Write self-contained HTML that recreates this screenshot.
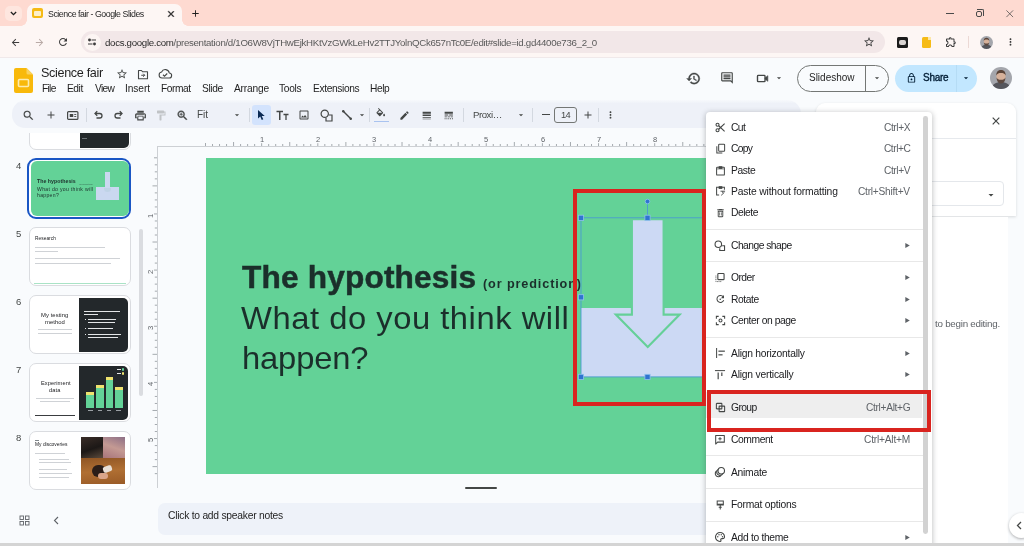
<!DOCTYPE html>
<html>
<head>
<meta charset="utf-8">
<title>Science fair - Google Slides</title>
<style>
*{box-sizing:border-box;margin:0;padding:0}
html,body{width:1024px;height:546px;overflow:hidden}
body{font-family:"Liberation Sans",sans-serif;background:#f9fbfd;position:relative;color:#1f1f1f}
.a{position:absolute}
.t{position:absolute;white-space:pre;line-height:1;will-change:transform;font-family:"Liberation Sans",sans-serif}
svg{position:absolute;overflow:visible}
.sep{position:absolute;width:1px;background:#d3d8e0;top:108px;height:14px}
.msep{position:absolute;left:706px;width:217px;height:1px;background:#e8e8e8}
</style>
</head>
<body>
<div id="root" class="a" style="left:0;top:0;width:1024px;height:546px;overflow:hidden;filter:blur(0.4px)">
<!-- browser chrome -->
<div class="a" style="left:0;top:0;width:1024px;height:26px;background:#fedad1"></div>
<div class="a" style="left:5px;top:6px;width:17px;height:15px;border-radius:5px;background:#fee6df"></div>
<svg style="left:9px;top:9px" width="9" height="9" viewBox="0 0 24 24"><path d="M5 8l7 7 7-7" fill="none" stroke="#1f1f1f" stroke-width="3.6"/></svg>
<div class="a" style="left:27px;top:4px;width:155px;height:22px;background:#fdf6f4;border-radius:7px 7px 0 0"></div>
<div class="a" style="left:21px;top:20px;width:6px;height:6px;background:radial-gradient(circle at 0 0,rgba(0,0,0,0) 5.5px,#fdf6f4 6px)"></div>
<div class="a" style="left:182px;top:20px;width:6px;height:6px;background:radial-gradient(circle at 100% 0,rgba(0,0,0,0) 5.5px,#fdf6f4 6px)"></div>
<!-- favicon -->
<div class="a" style="left:32px;top:8px;width:11px;height:10px;border-radius:2px;background:#f5ba15"></div>
<div class="a" style="left:34px;top:10.5px;width:7px;height:5px;background:#fdf0c9;border-radius:1px"></div>
<svg style="left:166px;top:8.5px" width="10" height="10" viewBox="0 0 24 24"><path d="M19 6.41L17.59 5 12 10.59 6.41 5 5 6.41 10.59 12 5 17.59 6.410 19 12 13.410 17.590 19 19 17.590 13.410 12z" fill="#1f1f1f" stroke="#1f1f1f" stroke-width="1"/></svg>
<svg style="left:189.500px;top:8px" width="11" height="11" viewBox="0 0 24 24"><path d="M19 13h-6v6h-2v-6H5v-2h6V5h2v6h6v2z" fill="#1f1f1f"/></svg>
<!-- window controls -->
<div class="a" style="left:945.500px;top:13px;width:8px;height:1px;background:#4a4a4a"></div>
<div class="a" style="left:975.500px;top:10.500px;width:6.500px;height:6.500px;border:1px solid #4a4a4a;border-radius:2px;background:#fedad1"></div>
<div class="a" style="left:977px;top:8.5px;width:7px;height:7px;border-top:1px solid #4a4a4a;border-right:1px solid #4a4a4a;border-radius:0 2px 0 0"></div>
<svg style="left:1006px;top:9.500px" width="7.500" height="7.500" viewBox="0 0 9 9"><path d="M.5.5l8 8M8.500.5l-8 8" stroke="#4a4a4a" stroke-width="0.9" fill="none"/></svg>
<!-- address row -->
<div class="a" style="left:0;top:26px;width:1024px;height:32px;background:#fdf6f4"></div>
<div class="a" style="left:0;top:57px;width:1024px;height:1px;background:#f0e9ea"></div>
<svg style="left:9.500px;top:36.500px" width="11" height="11" viewBox="0 0 24 24"><path d="M20 11H7.830l5.590-5.590L12 4l-8 8 8 8 1.410-1.410L7.830 13H20v-2z" fill="#3c3c3c"/></svg>
<svg style="left:33.500px;top:36.500px" width="11" height="11" viewBox="0 0 24 24"><path d="M12 4l-1.410 1.410L16.170 11H4v2h12.170l-5.580 5.590L12 20l8-8z" fill="#b9aaa6"/></svg>
<svg style="left:57px;top:36px" width="12" height="12" viewBox="0 0 24 24"><path d="M17.650 6.350C16.200 4.900 14.210 4 12 4c-4.420 0-7.990 3.580-7.990 8s3.570 8 7.990 8c3.730 0 6.840-2.550 7.730-6h-2.080c-.82 2.330-3.040 4-5.650 4-3.310 0-6-2.690-6-6s2.690-6 6-6c1.660 0 3.140.69 4.220 1.780L13 11h7V4l-2.350 2.350z" fill="#3c3c3c"/></svg>
<div class="a" style="left:81px;top:31.200px;width:804px;height:21.800px;border-radius:11px;background:#f2e7e8"></div>
<div class="a" style="left:83.500px;top:33.600px;width:17px;height:17px;border-radius:9px;background:#fcf5f3"></div>
<svg style="left:87px;top:37px" width="10" height="10" viewBox="0 0 20 20"><g stroke="#3c3c3c" stroke-width="2.200" fill="none"><path d="M9 6h9M2 14h9"/><circle cx="5" cy="6" r="2.900" fill="#3c3c3c" stroke="none"/><circle cx="15" cy="14" r="2.900" fill="#3c3c3c" stroke="none"/></g></svg>
<svg style="left:862.500px;top:36px" width="12" height="12" viewBox="0 0 24 24"><path d="M22 9.240l-7.190-.62L12 2 9.190 8.630 2 9.240l5.460 4.730L5.820 21 12 17.270 18.180 21l-1.630-7.030L22 9.240zM12 15.400l-3.760 2.270 1-4.280-3.320-2.880 4.380-.38L12 6.100l1.710 4.040 4.380.38-3.320 2.880 1 4.280L12 15.400z" fill="#3c3c3c"/></svg>
<!-- extension icons -->
<div class="a" style="left:897px;top:37px;width:11px;height:10.500px;border-radius:1.500px;background:#1b1b1b"></div>
<div class="a" style="left:899.300px;top:40px;width:6.400px;height:4.500px;border-radius:2px;background:#d9d4d2"></div>
<div class="a" style="left:921.500px;top:36.500px;width:9px;height:11px;border-radius:1.500px;background:#f6bb16"></div>
<div class="a" style="left:927.500px;top:36.500px;width:3px;height:3px;background:#fde7a8"></div>
<svg style="left:944.500px;top:36px" width="12" height="12" viewBox="0 0 24 24"><path d="M10.500 4.500c.28 0 .5.22.5.5v2h6v6h2c.28 0 .5.22.5.5s-.22.5-.5.5h-2v6h-2.120c-.68-1.750-2.390-3-4.380-3s-3.700 1.250-4.380 3H4v-2.120c1.750-.68 3-2.390 3-4.380 0-1.990-1.240-3.700-2.990-4.380L4 7h6V5c0-.28.220-.5.5-.5m0-2C9.120 2.500 8 3.620 8 5H4c-1.100 0-1.990.9-1.990 2v3.800h.29c1.490 0 2.700 1.210 2.700 2.700s-1.210 2.700-2.700 2.700H2V20c0 1.100.9 2 2 2h3.800v-.3c0-1.490 1.210-2.700 2.700-2.700s2.700 1.210 2.700 2.700v.3H17c1.100 0 2-.9 2-2v-4c1.380 0 2.500-1.120 2.500-2.500S20.380 11 19 11V7c0-1.100-.9-2-2-2h-4c0-1.380-1.120-2.500-2.500-2.500z" fill="#3c3c3c"/></svg>
<div class="a" style="left:968px;top:36px;width:1px;height:12px;background:#ecd9d5"></div>
<svg style="left:979.500px;top:35.500px" width="13" height="13" viewBox="0 0 22 22"><defs><clipPath id="av1"><circle cx="11" cy="11" r="11"/></clipPath></defs><g clip-path="url(#av1)"><rect width="22" height="22" fill="#a4a6ac"/><path d="M2 22c0-5 4-7 9-7s9 2 9 7z" fill="#55565c"/><ellipse cx="11" cy="9.500" rx="4.600" ry="5.600" fill="#d6b19a"/><path d="M6.300 8.500c0-4 2-5.500 4.700-5.500s4.700 1.500 4.700 5.500c-1-2-2.500-2.500-4.700-2.500s-3.700.5-4.700 2.500z" fill="#5a4438"/><path d="M6.500 10.500c.3 4 2 6 4.500 6s4.200-2 4.500-6c-.8 1.800-2.200 2.300-4.500 2.300s-3.700-.5-4.500-2.300z" fill="#5e4a40"/></g></svg>
<svg style="left:1005px;top:36px" width="11" height="12" viewBox="0 0 24 24"><path d="M12 8c1.100 0 2-.9 2-2s-.9-2-2-2-2 .9-2 2 .9 2 2 2zm0 2c-1.100 0-2 .9-2 2s.9 2 2 2 2-.9 2-2-.9-2-2-2zm0 6c-1.100 0-2 .9-2 2s.9 2 2 2 2-.9 2-2-.9-2-2-2z" fill="#3c3c3c"/></svg>

<!-- slides header -->
<div class="a" style="left:0;top:58px;width:1024px;height:488px;background:#f9fbfd"></div>
<!-- logo -->
<svg style="left:14px;top:68px" width="19" height="25" viewBox="0 0 19 25"><path d="M2 0h10.500L19 6.500V23a2 2 0 0 1-2 2H2a2 2 0 0 1-2-2V2a2 2 0 0 1 2-2z" fill="#f8b90b"/><path d="M12.500 0L19 6.500h-5a1.500 1.500 0 0 1-1.500-1.500z" fill="#f9d25f"/><rect x="4.500" y="11.500" width="10" height="7" rx="1" fill="none" stroke="#fdecb0" stroke-width="1.600"/></svg>
<!-- star, folder, cloud -->
<svg style="left:115.500px;top:68px" width="12" height="12" viewBox="0 0 24 24"><path d="M22 9.240l-7.190-.62L12 2 9.190 8.630 2 9.240l5.460 4.730L5.820 21 12 17.270 18.180 21l-1.630-7.030L22 9.240zM12 15.400l-3.760 2.270 1-4.280-3.320-2.880 4.380-.38L12 6.100l1.710 4.040 4.380.38-3.320 2.880 1 4.280L12 15.400z" fill="#444746"/></svg>
<svg style="left:137px;top:68.500px" width="12" height="11" viewBox="0 0 24 22"><path d="M3 3h6l2 2.500h10v14H3z" fill="none" stroke="#444746" stroke-width="2.200" stroke-linejoin="round"/><path d="M8.500 12.500h6.500M12.500 9.500l3 3-3 3" fill="none" stroke="#444746" stroke-width="2"/></svg>
<svg style="left:158px;top:69px" width="14" height="10" viewBox="0 0 28 20"><path d="M8 18a6 6 0 0 1-.8-11.900A8 8 0 0 1 22.500 8 5 5 0 0 1 22 18z" fill="none" stroke="#444746" stroke-width="2.200" stroke-linejoin="round"/><path d="M10 11.500l3 3 5.500-5.500" fill="none" stroke="#444746" stroke-width="2.200"/></svg>
<!-- right icons -->
<svg style="left:685.500px;top:70.500px" width="15" height="15" viewBox="0 0 24 24"><path d="M13 3c-4.970 0-9 4.030-9 9H1l3.890 3.890.07.14L9 12H6c0-3.870 3.130-7 7-7s7 3.130 7 7-3.130 7-7 7c-1.930 0-3.680-.79-4.940-2.060l-1.420 1.420C8.270 19.990 10.510 21 13 21c4.970 0 9-4.030 9-9s-4.030-9-9-9zm-1 5v5l4.280 2.540.72-1.210-3.500-2.080V8H12z" fill="#444746" stroke="#444746" stroke-width=".6"/></svg>
<svg style="left:719.500px;top:71px" width="14" height="14" viewBox="0 0 24 24"><path d="M21.990 4c0-1.100-.89-2-1.990-2H4c-1.100 0-2 .9-2 2v12c0 1.100.9 2 2 2h14l4 4-.01-18zM20 4v13.170L18.830 16H4V4h16zM6 12h12v2H6zm0-3h12v2H6zm0-3h12v2H6z" fill="#444746"/></svg>
<svg style="left:754.500px;top:70.500px" width="15" height="15" viewBox="0 0 24 24"><rect x="4" y="7" width="12" height="10" rx="1.200" fill="none" stroke="#444746" stroke-width="2.200"/><path d="M16 11.200l4.500-3.700v9l-4.500-3.700z" fill="#444746" stroke="#444746" stroke-width="1" stroke-linejoin="round"/></svg>
<svg style="left:774px;top:73px" width="10" height="10" viewBox="0 0 24 24"><path d="M7 10l5 5 5-5z" fill="#444746"/></svg>
<!-- slideshow button -->
<div class="a" style="left:797px;top:65px;width:92px;height:27px;border:1px solid #747775;border-radius:14px;background:#f9fbfd"></div>
<div class="a" style="left:865px;top:65px;width:1px;height:27px;background:#747775"></div>
<svg style="left:871.500px;top:73px" width="10" height="10" viewBox="0 0 24 24"><path d="M7 10l5 5 5-5z" fill="#444746"/></svg>
<!-- share button -->
<div class="a" style="left:894.500px;top:65px;width:82.500px;height:27px;border-radius:14px;background:#c2e7ff"></div>
<div class="a" style="left:956px;top:65px;width:1px;height:27px;background:#b5dcf5"></div>
<svg style="left:905.500px;top:72px" width="11" height="12" viewBox="0 0 24 24"><path d="M18 8h-1V6c0-2.760-2.240-5-5-5S7 3.240 7 6v2H6c-1.100 0-2 .9-2 2v10c0 1.100.9 2 2 2h12c1.100 0 2-.9 2-2V10c0-1.100-.9-2-2-2zM9 6c0-1.660 1.340-3 3-3s3 1.340 3 3v2H9V6zm9 14H6V10h12v10zm-6-3c1.100 0 2-.9 2-2s-.9-2-2-2-2 .9-2 2 .9 2 2 2z" fill="#001d35"/></svg>
<svg style="left:960.500px;top:73px" width="10" height="10" viewBox="0 0 24 24"><path d="M7 10l5 5 5-5z" fill="#001d35"/></svg>
<!-- avatar -->
<svg style="left:990px;top:67px" width="22" height="22" viewBox="0 0 22 22"><defs><clipPath id="av2"><circle cx="11" cy="11" r="11"/></clipPath></defs><g clip-path="url(#av2)"><rect width="22" height="22" fill="#a4a6ac"/><path d="M2 22c0-5 4-7 9-7s9 2 9 7z" fill="#55565c"/><ellipse cx="11" cy="9.500" rx="4.600" ry="5.600" fill="#d6b19a"/><path d="M6.300 8.500c0-4 2-5.500 4.700-5.500s4.700 1.500 4.700 5.500c-1-2-2.500-2.500-4.700-2.500s-3.700.5-4.700 2.500z" fill="#5a4438"/><path d="M6.500 10.500c.3 4 2 6 4.500 6s4.200-2 4.500-6c-.8 1.800-2.200 2.300-4.500 2.300s-3.700-.5-4.500-2.300z" fill="#5e4a40"/></g></svg>

<!-- toolbar -->
<div class="a" style="left:12px;top:100px;width:788.500px;height:27.500px;border-radius:14px 14px 13px 13px;background:linear-gradient(#f7f9fc,#eef1f8 3.500px)"></div>
<svg style="left:22px;top:108.500px" width="13" height="13" viewBox="0 0 24 24"><path d="M15.500 14h-.79l-.28-.27A6.471 6.471 0 0 0 16 9.500 6.500 6.500 0 1 0 9.500 16c1.610 0 3.090-.59 4.230-1.570l.27.28v.79l5 4.990L20.490 19l-4.990-5zm-6 0C7.010 14 5 11.990 5 9.500S7.010 5 9.500 5 14 7.010 14 9.500 11.990 14 9.500 14z" fill="#444746" stroke="#444746" stroke-width=".2"/></svg>
<svg style="left:44.500px;top:109px" width="12" height="12" viewBox="0 0 24 24"><path d="M19 13h-6v6h-2v-6H5v-2h6V5h2v6h6v2z" fill="#444746"/></svg>
<svg style="left:67px;top:110.500px" width="11.500" height="9" viewBox="0 0 23 18"><rect x="1.200" y="1.200" width="20.600" height="15.600" rx="2" fill="none" stroke="#444746" stroke-width="2.400"/><rect x="5.500" y="6" width="7" height="6" fill="#444746"/><path d="M14.500 7h4M14.500 11h4" stroke="#444746" stroke-width="1.800"/></svg>
<div class="sep" style="left:85.500px"></div>
<svg style="left:92px;top:109px" width="12" height="12" viewBox="0 0 24 24"><path d="M7 9h8.500a4.500 4.500 0 0 1 0 9H9" fill="none" stroke="#444746" stroke-width="2.600"/><path d="M10.500 4.500L6 9l4.500 4.500" fill="none" stroke="#444746" stroke-width="2.600"/></svg>
<svg style="left:112.500px;top:109px" width="12" height="12" viewBox="0 0 24 24"><path d="M17 9H8.500a4.500 4.500 0 0 0 0 9H15" fill="none" stroke="#444746" stroke-width="2.600"/><path d="M13.500 4.500L18 9l-4.500 4.500" fill="none" stroke="#444746" stroke-width="2.600"/></svg>
<svg style="left:134px;top:108.500px" width="13" height="13" viewBox="0 0 24 24"><path d="M19 8H5c-1.660 0-3 1.340-3 3v6h4v4h12v-4h4v-6c0-1.660-1.340-3-3-3zm-3 11H8v-5h8v5zm3-7c-.55 0-1-.45-1-1s.45-1 1-1 1 .45 1 1-.45 1-1 1zm-1-9H6v4h12V3z" fill="#444746"/><path d="M4.500 10.500h15v5h-2v-3h-11v3h-2z" fill="#eef1f8"/></svg>
<svg style="left:155px;top:108.500px" width="12" height="13" viewBox="0 0 24 24"><path d="M18 4V3c0-.55-.45-1-1-1H5c-.55 0-1 .45-1 1v4c0 .55.45 1 1 1h12c.55 0 1-.45 1-1V6h1v4H9v11c0 .55.45 1 1 1h2c.55 0 1-.45 1-1v-9h8V4h-3z" fill="#c0c3c6"/></svg>
<svg style="left:175.500px;top:108.500px" width="13" height="13" viewBox="0 0 24 24"><path d="M15.500 14h-.79l-.28-.27C15.410 12.590 16 11.110 16 9.500 16 5.910 13.090 3 9.500 3S3 5.910 3 9.500 5.910 16 9.500 16c1.610 0 3.090-.59 4.230-1.570l.27.28v.79l5 4.990L20.490 19l-4.990-5zm-6 0C7.010 14 5 11.990 5 9.500S7.010 5 9.500 5 14 7.010 14 9.500 11.990 14 9.500 14zm2.500-4h-2v2H9v-2H7V9h2V7h1v2h2v1z" fill="#444746" stroke="#444746" stroke-width=".6"/></svg>
<svg style="left:231.500px;top:110px" width="10" height="10" viewBox="0 0 24 24"><path d="M7 10l5 5 5-5z" fill="#444746"/></svg>
<div class="sep" style="left:249px"></div>
<div class="a" style="left:251.500px;top:105px;width:19.500px;height:19.500px;border-radius:3px;background:#d3e3fd"></div>
<svg style="left:256px;top:109px" width="10" height="12" viewBox="0 0 20 24"><path d="M4 2v17l4.500-4 3 7 3-1.300-3-6.700h6z" fill="#0b2a55"/></svg>
<svg style="left:275.500px;top:109.500px" width="13" height="11" viewBox="0 0 26 22"><path d="M1 3h13M7.500 3v17" stroke="#444746" stroke-width="3" fill="none"/><path d="M15 9h10M20 9v11" stroke="#444746" stroke-width="2.600" fill="none"/></svg>
<svg style="left:297.500px;top:109px" width="12" height="12" viewBox="0 0 24 24"><path d="M19 5v14H5V5h14m0-2H5c-1.100 0-2 .9-2 2v14c0 1.100.9 2 2 2h14c1.100 0 2-.9 2-2V5c0-1.100-.9-2-2-2zm-4.860 8.860l-3 3.870L9 13.140 6 17h12l-3.860-5.140z" fill="#444746"/></svg>
<svg style="left:319.500px;top:108.500px" width="13" height="13" viewBox="0 0 26 26"><circle cx="9.500" cy="9.500" r="7.300" fill="none" stroke="#444746" stroke-width="2.400"/><path d="M18 12h6v12H12v-6" fill="none" stroke="#444746" stroke-width="2.400"/></svg>
<svg style="left:341px;top:109px" width="12" height="12" viewBox="0 0 24 24"><path d="M4 4l16 16" stroke="#444746" stroke-width="3"/><circle cx="4.500" cy="4.500" r="2.500" fill="#444746"/><circle cx="19.500" cy="19.500" r="2.500" fill="#444746"/></svg>
<svg style="left:357px;top:110px" width="10" height="10" viewBox="0 0 24 24"><path d="M7 10l5 5 5-5z" fill="#444746"/></svg>
<div class="sep" style="left:368.500px"></div>
<svg style="left:375px;top:108px" width="11.500" height="11.500" viewBox="0 0 24 24"><path d="M16.560 8.940L7.620 0 6.210 1.410l2.380 2.380-5.150 5.150c-.59.59-.59 1.540 0 2.120l5.500 5.500c.29.29.68.44 1.060.44s.77-.15 1.060-.44l5.500-5.500c.59-.58.59-1.530 0-2.120zM5.210 10L10 5.210 14.790 10H5.210zM19 11.500s-2 2.170-2 3.500c0 1.100.9 2 2 2s2-.9 2-2c0-1.330-2-3.500-2-3.500z" fill="#444746"/></svg>
<div class="a" style="left:374px;top:120.500px;width:15px;height:1.500px;background:#a9c3f0"></div>
<svg style="left:398.500px;top:109.500px" width="11" height="11" viewBox="0 0 24 24"><path d="M3 17.250V21h3.750L17.810 9.940l-3.750-3.750L3 17.250zM20.710 7.040c.39-.39.39-1.020 0-1.410l-2.340-2.340c-.39-.39-1.020-.39-1.410 0l-1.830 1.830 3.750 3.750 1.830-1.830z" fill="#444746"/></svg>
<svg style="left:421px;top:109.500px" width="11.500" height="11" viewBox="0 0 24 24"><path d="M3 17h18v-2H3v2zm0 3h18v-1H3v1zm0-7h18v-3H3v3zm0-9v4h18V4H3z" fill="#444746"/></svg>
<svg style="left:443px;top:109.500px" width="11.500" height="11" viewBox="0 0 24 24"><path d="M3 16h5v-2H3v2zm6.500 0h5v-2h-5v2zm6.500 0h5v-2h-5v2zM3 20h2v-2H3v2zm4 0h2v-2H7v2zm4 0h2v-2h-2v2zm4 0h2v-2h-2v2zm4 0h2v-2h-2v2zM3 12h8v-2H3v2zm10 0h8v-2h-8v2zM3 4v4h18V4H3z" fill="#444746"/></svg>
<div class="sep" style="left:462.500px"></div>
<svg style="left:515.500px;top:110px" width="10" height="10" viewBox="0 0 24 24"><path d="M7 10l5 5 5-5z" fill="#444746"/></svg>
<div class="sep" style="left:532px"></div>
<div class="a" style="left:541.500px;top:114.400px;width:8px;height:1.100px;background:#444746"></div>
<div class="a" style="left:554px;top:106.500px;width:22.500px;height:16px;border:1px solid #747775;border-radius:3px"></div>
<svg style="left:582px;top:109px" width="12" height="12" viewBox="0 0 24 24"><path d="M19 13h-6v6h-2v-6H5v-2h6V5h2v6h6v2z" fill="#444746"/></svg>
<div class="sep" style="left:598px"></div>
<svg style="left:605px;top:109px" width="11" height="12" viewBox="0 0 24 24"><path d="M12 8c1.100 0 2-.9 2-2s-.9-2-2-2-2 .9-2 2 .9 2 2 2zm0 2c-1.100 0-2 .9-2 2s.9 2 2 2 2-.9 2-2-.9-2-2-2zm0 6c-1.100 0-2 .9-2 2s.9 2 2 2 2-.9 2-2-.9-2-2-2z" fill="#444746"/></svg>

<!-- filmstrip -->
<div class="a" style="left:0;top:133.300px;width:150px;height:409.700px;overflow:hidden"><div class="a" style="left:0;top:-133.300px;width:150px;height:546px">
<div class="a" style="left:28.500px;top:91px;width:102px;height:58.500px;border:1px solid #dadce0;border-radius:7px;background:#fff;overflow:hidden;"><div class="a" style="left:50px;top:0;width:49px;height:55.500px;background:#23282b;border-radius:0 5px 5px 0"></div><div class="a" style="left:52.5px;top:45.5px;width:5.0px;height:0.8px;background:#6b7276"></div></div>
<div class="a" style="left:27.300px;top:157.800px;width:104.200px;height:61.700px;border:2px solid #1a56c4;border-radius:9px;background:#fff"></div>
<div class="a" style="left:30.600px;top:161px;width:98.400px;height:54.800px;border-radius:6px;background:#63d297;overflow:hidden"><div class="a" style="left:65.400px;top:26.300px;width:23.400px;height:12.300px;background:#cad8f0"></div><div class="a" style="left:74.400px;top:10.500px;width:5.200px;height:21px;background:#cad8f0"></div><div class="a" style="left:73.400px;top:27px;width:7.200px;height:4px;background:#bfd3e6;border-radius:0 0 4px 4px"></div><span class="t" style="left:6.400px;top:18.300px;font-size:5.200px;font-weight:bold;color:#1d302c;letter-spacing:.05px">The hypothesis</span><span class="t" style="left:48px;top:21.500px;font-size:2px;font-weight:bold;color:#1d302c;opacity:.55">(or prediction)</span><span class="t" style="left:6.400px;top:25.600px;font-size:5.100px;color:#1d302c;letter-spacing:.32px">What do you think will</span><span class="t" style="left:6.400px;top:32.400px;font-size:5.100px;color:#1d302c;letter-spacing:.32px">happen?</span></div>
<div class="a" style="left:28.500px;top:227px;width:102px;height:58.500px;border:1px solid #dadce0;border-radius:7px;background:#fff;overflow:hidden;"><span class="t" style="left:5.0px;top:9.4px;font-size:4.8px;color:#202124;letter-spacing:.05px">Research</span><div class="a" style="left:5.0px;top:19.2px;width:70.0px;height:0.8px;background:#cfd2d6"></div><div class="a" style="left:5.0px;top:23.4px;width:23.0px;height:0.8px;background:#cfd2d6"></div><div class="a" style="left:5.0px;top:30.2px;width:85.0px;height:0.8px;background:#cfd2d6"></div><div class="a" style="left:5.0px;top:35.0px;width:76.0px;height:0.8px;background:#cfd2d6"></div><div class="a" style="left:4.5px;top:55.0px;width:92.0px;height:0.9px;background:#a9e3c6"></div></div>
<div class="a" style="left:28.500px;top:295px;width:102px;height:58.500px;border:1px solid #dadce0;border-radius:7px;background:#fff;overflow:hidden;"><div class="a" style="left:49.800px;top:2px;width:49px;height:53.500px;background:#23282b;border-radius:0 5px 5px 0"></div><span class="t" style="left:11.5px;top:16.8px;font-size:5.9px;color:#202124;letter-spacing:.05px">My testing</span><span class="t" style="left:15.8px;top:24.2px;font-size:5.9px;color:#202124;letter-spacing:.05px">method</span><div class="a" style="left:8.5px;top:33.3px;width:34.0px;height:0.8px;background:#cfd2d6"></div><div class="a" style="left:8.5px;top:36.6px;width:34.0px;height:0.8px;background:#cfd2d6"></div><div class="a" style="left:54.2px;top:14.5px;width:36.0px;height:1.1px;background:#e4e6e8"></div><div class="a" style="left:54.2px;top:17.6px;width:14.0px;height:1.1px;background:#e4e6e8"></div><div class="a" style="left:58.5px;top:23.0px;width:28.0px;height:1.1px;background:#e4e6e8"></div><div class="a" style="left:58.5px;top:26.0px;width:27.0px;height:1.1px;background:#e4e6e8"></div><div class="a" style="left:58.5px;top:31.8px;width:25.0px;height:1.1px;background:#e4e6e8"></div><div class="a" style="left:58.5px;top:37.6px;width:33.0px;height:1.1px;background:#e4e6e8"></div><div class="a" style="left:58.5px;top:41.2px;width:30.0px;height:1.1px;background:#e4e6e8"></div><div class="a" style="left:55.5px;top:23.0px;width:1.2px;height:1.2px;background:#e4e6e8"></div><div class="a" style="left:55.5px;top:31.8px;width:1.2px;height:1.2px;background:#e4e6e8"></div><div class="a" style="left:55.5px;top:37.6px;width:1.2px;height:1.2px;background:#e4e6e8"></div></div>
<div class="a" style="left:28.500px;top:363px;width:102px;height:58.500px;border:1px solid #dadce0;border-radius:7px;background:#fff;overflow:hidden;"><div class="a" style="left:49.800px;top:2px;width:49px;height:53.500px;background:#23282b;border-radius:0 5px 5px 0"></div><span class="t" style="left:11.0px;top:16.5px;font-size:5.7px;color:#202124;letter-spacing:.08px">Experiment</span><span class="t" style="left:19.8px;top:23.6px;font-size:5.7px;color:#202124;letter-spacing:.08px">data</span><div class="a" style="left:6.5px;top:33.6px;width:38.0px;height:0.8px;background:#cfd2d6"></div><div class="a" style="left:10.5px;top:37.2px;width:30.0px;height:0.8px;background:#cfd2d6"></div><div class="a" style="left:5.0px;top:51.2px;width:40.0px;height:1px;background:#3a3d40"></div><div class="a" style="left:56.7px;top:28.3px;width:8.0px;height:15.5px;background:#63d297"></div><div class="a" style="left:56.7px;top:28.3px;width:8.0px;height:3px;background:#efe36f"></div><div class="a" style="left:58.2px;top:46.0px;width:5.0px;height:0.9px;background:#9aa0a4"></div><div class="a" style="left:66.7px;top:20.9px;width:7.4px;height:22.9px;background:#63d297"></div><div class="a" style="left:66.7px;top:20.9px;width:7.4px;height:3px;background:#efe36f"></div><div class="a" style="left:68.2px;top:46.0px;width:4.4px;height:0.9px;background:#9aa0a4"></div><div class="a" style="left:76.1px;top:13.2px;width:7.4px;height:30.6px;background:#63d297"></div><div class="a" style="left:76.1px;top:13.2px;width:7.4px;height:3px;background:#efe36f"></div><div class="a" style="left:77.6px;top:46.0px;width:4.4px;height:0.9px;background:#9aa0a4"></div><div class="a" style="left:85.3px;top:23.4px;width:8.0px;height:20.4px;background:#63d297"></div><div class="a" style="left:85.3px;top:23.4px;width:8.0px;height:3px;background:#efe36f"></div><div class="a" style="left:86.8px;top:46.0px;width:5.0px;height:0.9px;background:#9aa0a4"></div><div class="a" style="left:92px;top:4.300px;width:2.400px;height:2.400px;border-radius:1.200px;background:#63d297"></div><div class="a" style="left:92px;top:8.200px;width:2.400px;height:2.400px;border-radius:1.200px;background:#efe36f"></div><div class="a" style="left:87.0px;top:5.0px;width:4.0px;height:1px;background:#e4e6e8"></div><div class="a" style="left:87.0px;top:9.0px;width:4.0px;height:1px;background:#e4e6e8"></div></div>
<div class="a" style="left:28.500px;top:431px;width:102px;height:58.500px;border:1px solid #dadce0;border-radius:7px;background:#fff;overflow:hidden;"><div class="a" style="left:51.700px;top:5.100px;width:21.700px;height:20.500px;background:linear-gradient(160deg,#3a2d27,#1c1816 55%,#5b4a3c)"></div><div class="a" style="left:73.900px;top:5.100px;width:21.400px;height:20.500px;background:linear-gradient(200deg,#8d6f86,#c49a93 50%,#a8747a)"></div><div class="a" style="left:51.700px;top:26.100px;width:43.600px;height:25.600px;background:linear-gradient(175deg,#8f5524,#b06f33 50%,#9a5b27)"></div><div class="a" style="left:62px;top:33px;width:14px;height:12px;border-radius:6px;background:#2a1d18"></div><div class="a" style="left:73px;top:33.500px;width:9px;height:6px;border-radius:2px;background:#e8dfd6;transform:rotate(-20deg)"></div><div class="a" style="left:68px;top:41px;width:10px;height:6px;border-radius:3px;background:#d9a58a"></div><span class="t" style="left:5.0px;top:10.8px;font-size:4.9px;color:#202124;letter-spacing:0">My discoveries</span><div class="a" style="left:5.0px;top:8.0px;width:4.0px;height:0.8px;background:#80868b"></div><div class="a" style="left:5.0px;top:21.0px;width:30.0px;height:0.8px;background:#cfd2d6"></div><div class="a" style="left:9.5px;top:26.8px;width:30.0px;height:0.8px;background:#cfd2d6"></div><div class="a" style="left:9.5px;top:30.0px;width:32.0px;height:0.8px;background:#cfd2d6"></div><div class="a" style="left:9.5px;top:36.5px;width:28.0px;height:0.8px;background:#cfd2d6"></div><div class="a" style="left:9.5px;top:41.0px;width:33.0px;height:0.8px;background:#cfd2d6"></div><div class="a" style="left:9.5px;top:44.5px;width:30.0px;height:0.8px;background:#cfd2d6"></div></div>
<div class="a" style="left:139px;top:228.500px;width:4.300px;height:167px;border-radius:2.200px;background:#dadce0"></div>
</div></div>
<!-- rulers & canvas -->
<div class="a" style="left:157px;top:131px;width:660px;height:16px;background:#f9fbfd"></div>
<div class="a" style="left:157px;top:146px;width:660px;height:1px;background:#cdd0d4"></div>
<div class="a" style="left:157px;top:146px;width:1px;height:342px;background:#cdd0d4"></div>
<svg style="left:0;top:0" width="1024" height="546" viewBox="0 0 1024 546"><g stroke="#8f959b" stroke-width="0.8" fill="none"><path d="M205.50 146V143"/><path d="M212.52 146V144"/><path d="M219.54 146V144"/><path d="M226.56 146V144"/><path d="M233.57 146V142"/><path d="M240.59 146V144"/><path d="M247.61 146V144"/><path d="M254.63 146V144"/><path d="M268.67 146V144"/><path d="M275.69 146V144"/><path d="M282.71 146V144"/><path d="M289.73 146V142"/><path d="M296.74 146V144"/><path d="M303.76 146V144"/><path d="M310.78 146V144"/><path d="M324.82 146V144"/><path d="M331.84 146V144"/><path d="M338.86 146V144"/><path d="M345.88 146V142"/><path d="M352.89 146V144"/><path d="M359.91 146V144"/><path d="M366.93 146V144"/><path d="M380.97 146V144"/><path d="M387.99 146V144"/><path d="M395.01 146V144"/><path d="M402.02 146V142"/><path d="M409.04 146V144"/><path d="M416.06 146V144"/><path d="M423.08 146V144"/><path d="M437.12 146V144"/><path d="M444.14 146V144"/><path d="M451.16 146V144"/><path d="M458.17 146V142"/><path d="M465.19 146V144"/><path d="M472.21 146V144"/><path d="M479.23 146V144"/><path d="M493.27 146V144"/><path d="M500.29 146V144"/><path d="M507.31 146V144"/><path d="M514.33 146V142"/><path d="M521.34 146V144"/><path d="M528.36 146V144"/><path d="M535.38 146V144"/><path d="M549.42 146V144"/><path d="M556.44 146V144"/><path d="M563.46 146V144"/><path d="M570.47 146V142"/><path d="M577.49 146V144"/><path d="M584.51 146V144"/><path d="M591.53 146V144"/><path d="M605.57 146V144"/><path d="M612.59 146V144"/><path d="M619.61 146V144"/><path d="M626.62 146V142"/><path d="M633.64 146V144"/><path d="M640.66 146V144"/><path d="M647.68 146V144"/><path d="M661.72 146V144"/><path d="M668.74 146V144"/><path d="M675.76 146V144"/><path d="M682.77 146V142"/><path d="M689.79 146V144"/><path d="M696.81 146V144"/><path d="M703.83 146V144"/><path d="M717.87 146V144"/><path d="M724.89 146V144"/><path d="M731.91 146V144"/><path d="M738.92 146V142"/><path d="M745.94 146V144"/><path d="M752.96 146V144"/><path d="M759.98 146V144"/><path d="M774.02 146V144"/><path d="M781.04 146V144"/><path d="M788.06 146V144"/><path d="M795.07 146V142"/><path d="M802.09 146V144"/><path d="M809.11 146V144"/><path d="M157 157.80H154"/><path d="M157 164.82H154.8"/><path d="M157 171.84H154.8"/><path d="M157 178.86H154.8"/><path d="M157 185.88H152.5"/><path d="M157 192.89H154.8"/><path d="M157 199.91H154.8"/><path d="M157 206.93H154.8"/><path d="M157 220.97H154.8"/><path d="M157 227.99H154.8"/><path d="M157 235.01H154.8"/><path d="M157 242.03H152.5"/><path d="M157 249.04H154.8"/><path d="M157 256.06H154.8"/><path d="M157 263.08H154.8"/><path d="M157 277.12H154.8"/><path d="M157 284.14H154.8"/><path d="M157 291.16H154.8"/><path d="M157 298.18H152.5"/><path d="M157 305.19H154.8"/><path d="M157 312.21H154.8"/><path d="M157 319.23H154.8"/><path d="M157 333.27H154.8"/><path d="M157 340.29H154.8"/><path d="M157 347.31H154.8"/><path d="M157 354.33H152.5"/><path d="M157 361.34H154.8"/><path d="M157 368.36H154.8"/><path d="M157 375.38H154.8"/><path d="M157 389.42H154.8"/><path d="M157 396.44H154.8"/><path d="M157 403.46H154.8"/><path d="M157 410.48H152.5"/><path d="M157 417.49H154.8"/><path d="M157 424.51H154.8"/><path d="M157 431.53H154.8"/><path d="M157 445.57H154.8"/><path d="M157 452.59H154.8"/><path d="M157 459.61H154.8"/><path d="M157 466.62H152.5"/><path d="M157 473.64H154.8"/><path d="M261.65 146V143.200"/><path d="M317.80 146V143.200"/><path d="M373.95 146V143.200"/><path d="M430.10 146V143.200"/><path d="M486.25 146V143.200"/><path d="M542.40 146V143.200"/><path d="M598.55 146V143.200"/><path d="M654.70 146V143.200"/><path d="M710.85 146V143.200"/><path d="M767.00 146V143.200"/><path d="M157 213.95H154"/><path d="M157 270.10H154"/><path d="M157 326.25H154"/><path d="M157 382.40H154"/><path d="M157 438.55H154"/></g></svg>
<span class="t" style="left:259.8px;top:135.65px;font-size:7.5px;color:#5f6368;">1</span>
<span class="t" style="left:316.0px;top:135.65px;font-size:7.5px;color:#5f6368;">2</span>
<span class="t" style="left:372.1px;top:135.65px;font-size:7.5px;color:#5f6368;">3</span>
<span class="t" style="left:428.3px;top:135.65px;font-size:7.5px;color:#5f6368;">4</span>
<span class="t" style="left:484.4px;top:135.65px;font-size:7.5px;color:#5f6368;">5</span>
<span class="t" style="left:540.6px;top:135.65px;font-size:7.5px;color:#5f6368;">6</span>
<span class="t" style="left:596.8px;top:135.65px;font-size:7.5px;color:#5f6368;">7</span>
<span class="t" style="left:652.9px;top:135.65px;font-size:7.5px;color:#5f6368;">8</span>
<span class="t" style="left:146.500px;top:211.7px;font-size:7.500px;color:#5f6368;width:8px;height:8px;transform:rotate(-90deg);transform-origin:4px 4px;text-align:center">1</span>
<span class="t" style="left:146.500px;top:267.8px;font-size:7.500px;color:#5f6368;width:8px;height:8px;transform:rotate(-90deg);transform-origin:4px 4px;text-align:center">2</span>
<span class="t" style="left:146.500px;top:323.9px;font-size:7.500px;color:#5f6368;width:8px;height:8px;transform:rotate(-90deg);transform-origin:4px 4px;text-align:center">3</span>
<span class="t" style="left:146.500px;top:380.1px;font-size:7.500px;color:#5f6368;width:8px;height:8px;transform:rotate(-90deg);transform-origin:4px 4px;text-align:center">4</span>
<span class="t" style="left:146.500px;top:436.3px;font-size:7.500px;color:#5f6368;width:8px;height:8px;transform:rotate(-90deg);transform-origin:4px 4px;text-align:center">5</span>
<div class="a" style="left:205.5px;top:157.8px;width:561.500px;height:316px;background:#63d297"></div>
<svg style="left:0;top:0" width="1024" height="546" viewBox="0 0 1024 546"><rect x="581" y="308" width="133" height="68.900" fill="#ccd9f4"/><path d="M631.900 219.300H663.600V314.600H679.700L647.750 347.100L615.800 314.600H631.900Z" fill="#ccd9f4" stroke="#65d098" stroke-width="2.100" stroke-linejoin="miter"/></svg>
<span class="t" style="left:242.2px;top:261.76px;font-size:31px;color:#1b2f2b;letter-spacing:0.165px;transform:scaleX(1.02);transform-origin:0 0;font-weight:bold;-webkit-text-stroke:0.5px #1b2f2b;">The hypothesis</span>
<span class="t" style="left:482.5px;top:277.67px;font-size:12.2px;color:#1b2f2b;letter-spacing:0.835px;transform:scaleX(1.04);transform-origin:0 0;font-weight:bold;">(or prediction)</span>
<span class="t" style="left:241.4px;top:302.59px;font-size:31.2px;color:#1b2f2b;letter-spacing:0.500px;transform:scaleX(1.05);transform-origin:0 0;">What do you think will</span>
<span class="t" style="left:241.6px;top:342.79px;font-size:31.2px;color:#1b2f2b;letter-spacing:-0.160px;transform:scaleX(1.05);transform-origin:0 0;">happen?</span>
<svg style="left:0;top:0" width="1024" height="546" viewBox="0 0 1024 546"><g fill="none" stroke="#4a9bd0" stroke-width="0.900"><rect x="581" y="217.800" width="133" height="159.100"/><path d="M647.500 217.800V201.500"/></g><g fill="#2f74d0" stroke="#8fc0ee" stroke-width="0.800"><rect x="578.4" y="215.2" width="5.200" height="5.200"/><rect x="644.9" y="215.2" width="5.200" height="5.200"/><rect x="578.4" y="294.7" width="5.200" height="5.200"/><rect x="578.4" y="374.3" width="5.200" height="5.200"/><rect x="644.9" y="374.3" width="5.200" height="5.200"/><circle cx="647.500" cy="201.500" r="2.300"/></g></svg>

<!-- notes -->
<div class="a" style="left:465px;top:487.300px;width:32px;height:1.800px;background:#444746;border-radius:1px"></div>
<div class="a" style="left:158px;top:502.500px;width:660px;height:32px;border-radius:7px;background:#eef2f9"></div>
<svg style="left:19px;top:514.500px" width="11" height="11" viewBox="0 0 22 22"><g fill="none" stroke="#5f6368" stroke-width="1.800"><rect x="2" y="2" width="7" height="7"/><rect x="13" y="2" width="7" height="7"/><rect x="2" y="13" width="7" height="7"/><rect x="13" y="13" width="7" height="7"/></g></svg>
<svg style="left:53px;top:516px" width="6" height="9" viewBox="0 0 12 18"><path d="M10 2L3 9l7 7" fill="none" stroke="#5f6368" stroke-width="2.200"/></svg>

<!-- right panel -->
<div class="a" style="left:815.500px;top:102.700px;width:200.500px;height:113.300px;background:#fff;border-radius:9px 9px 0 0;box-shadow:0 1px 3px rgba(60,64,67,.18)"></div>
<div class="a" style="left:815.500px;top:217px;width:192.500px;height:326px;background:#fff"></div>
<div class="a" style="left:815.500px;top:137.500px;width:200.500px;height:1px;background:#e6e9ed"></div>
<svg style="left:991px;top:115.600px" width="10" height="10" viewBox="0 0 10 10"><path d="M1.700 1.700l6.600 6.600M8.300 1.700l-6.600 6.600" stroke="#444746" stroke-width="1.200" fill="none"/></svg>
<div class="a" style="left:830px;top:181px;width:173.500px;height:24.500px;border:1px solid #e4e7eb;border-radius:4px"></div>
<svg style="left:985px;top:188.700px" width="12" height="12" viewBox="0 0 24 24"><path d="M7 10l5 5 5-5z" fill="#444746"/></svg>
<span class="t" style="left:935.0px;top:319.20px;font-size:9.8px;color:#5f6368;letter-spacing:-0.254px;">to begin editing.</span>
<div class="a" style="left:1009px;top:513px;width:25px;height:25px;border-radius:12.500px;background:#fff;box-shadow:0 1px 3px rgba(0,0,0,.3)"></div>
<svg style="left:1015.800px;top:521.200px" width="6" height="9" viewBox="0 0 12 18"><path d="M10 2L3 9l7 7" fill="none" stroke="#444746" stroke-width="2.600"/></svg>

<span class="t" style="left:48.0px;top:10.05px;font-size:8.8px;color:#1f1f1f;letter-spacing:-0.457px;">Science fair - Google Slides</span>
<span class="t" style="left:105.0px;top:37.59px;font-size:9.7px;color:#2a2a2a;letter-spacing:-0.313px;">docs.google.com<span style="color:#5a5a5a">/presentation/d/1O6W8VjTHwEjkHKtVzGWkLeHv2TTJYolnQCk657nTc0E/edit#slide=id.gd4400e736_2_0</span></span>
<span class="t" style="left:41.0px;top:67.13px;font-size:12.6px;color:#1f1f1f;letter-spacing:-0.332px;">Science fair</span>
<span class="t" style="left:42.0px;top:84.37px;font-size:10.2px;color:#1f1f1f;letter-spacing:-0.692px;">File</span>
<span class="t" style="left:67.0px;top:84.37px;font-size:10.2px;color:#1f1f1f;letter-spacing:-0.446px;">Edit</span>
<span class="t" style="left:95.0px;top:84.37px;font-size:10.2px;color:#1f1f1f;letter-spacing:-0.688px;">View</span>
<span class="t" style="left:125.0px;top:84.37px;font-size:10.2px;color:#1f1f1f;letter-spacing:-0.088px;">Insert</span>
<span class="t" style="left:161.0px;top:84.37px;font-size:10.2px;color:#1f1f1f;letter-spacing:-0.412px;">Format</span>
<span class="t" style="left:201.5px;top:84.37px;font-size:10.2px;color:#1f1f1f;letter-spacing:-0.368px;">Slide</span>
<span class="t" style="left:233.5px;top:84.37px;font-size:10.2px;color:#1f1f1f;letter-spacing:-0.192px;">Arrange</span>
<span class="t" style="left:279.0px;top:84.37px;font-size:10.2px;color:#1f1f1f;letter-spacing:-0.285px;">Tools</span>
<span class="t" style="left:312.5px;top:84.37px;font-size:10.2px;color:#1f1f1f;letter-spacing:-0.352px;">Extensions</span>
<span class="t" style="left:369.5px;top:84.37px;font-size:10.2px;color:#1f1f1f;letter-spacing:-0.415px;">Help</span>
<span class="t" style="left:808.5px;top:73.13px;font-size:10.0px;color:#1f1f1f;letter-spacing:-0.011px;">Slideshow</span>
<span class="t" style="left:923.0px;top:73.13px;font-size:10.0px;color:#001d35;letter-spacing:-0.264px;-webkit-text-stroke:0.35px #001d35;">Share</span>
<span class="t" style="left:196.5px;top:110.13px;font-size:10px;color:#444746;letter-spacing:-0.044px;">Fit</span>
<span class="t" style="left:473.4px;top:110.47px;font-size:9.6px;color:#444746;letter-spacing:-0.446px;">Proxi…</span>
<span class="t" style="left:560.8px;top:110.73px;font-size:9.3px;color:#444746;letter-spacing:-0.763px;">14</span>
<span class="t" style="left:15.5px;top:161.26px;font-size:9.5px;color:#444746;">4</span>
<span class="t" style="left:15.5px;top:229.26px;font-size:9.5px;color:#444746;">5</span>
<span class="t" style="left:15.5px;top:297.26px;font-size:9.5px;color:#444746;">6</span>
<span class="t" style="left:15.5px;top:365.26px;font-size:9.5px;color:#444746;">7</span>
<span class="t" style="left:15.5px;top:433.26px;font-size:9.5px;color:#444746;">8</span>
<span class="t" style="left:168.0px;top:511.38px;font-size:10.3px;color:#1f1f1f;letter-spacing:-0.249px;">Click to add speaker notes</span>
<!-- context menu -->
<div class="a" style="left:705.500px;top:111.500px;width:226px;height:440px;background:#fff;border-radius:4px 4px 0 0;box-shadow:0 1px 5px 1px rgba(60,64,67,.28)"></div>
<div class="a" style="left:923.300px;top:115.500px;width:4.800px;height:418.500px;border-radius:2.400px;background:#d2d2d2"></div>
<div class="msep" style="top:228.8px"></div>
<div class="msep" style="top:261.3px"></div>
<div class="msep" style="top:336.9px"></div>
<div class="msep" style="top:455.2px"></div>
<div class="msep" style="top:487.9px"></div>
<div class="msep" style="top:521.0px"></div>
<div class="a" style="left:706px;top:392px;width:215.500px;height:25.600px;background:#eeeeee"></div>
<svg style="left:904.500px;top:242.8px" width="5" height="5" viewBox="0 0 5 5"><path d="M.3 0L4.800 2.500L.3 5z" fill="#5f6368"/></svg>
<svg style="left:904.500px;top:275.3px" width="5" height="5" viewBox="0 0 5 5"><path d="M.3 0L4.800 2.500L.3 5z" fill="#5f6368"/></svg>
<svg style="left:904.500px;top:296.8px" width="5" height="5" viewBox="0 0 5 5"><path d="M.3 0L4.800 2.500L.3 5z" fill="#5f6368"/></svg>
<svg style="left:904.500px;top:318.3px" width="5" height="5" viewBox="0 0 5 5"><path d="M.3 0L4.800 2.500L.3 5z" fill="#5f6368"/></svg>
<svg style="left:904.500px;top:350.6px" width="5" height="5" viewBox="0 0 5 5"><path d="M.3 0L4.800 2.500L.3 5z" fill="#5f6368"/></svg>
<svg style="left:904.500px;top:371.7px" width="5" height="5" viewBox="0 0 5 5"><path d="M.3 0L4.800 2.500L.3 5z" fill="#5f6368"/></svg>
<svg style="left:904.500px;top:534.7px" width="5" height="5" viewBox="0 0 5 5"><path d="M.3 0L4.800 2.500L.3 5z" fill="#5f6368"/></svg>
<svg style="left:714.5px;top:122.0px" width="11" height="11" viewBox="0 0 24 24"><g fill="none" stroke="#444746" stroke-width="2.400"><circle cx="5.500" cy="6" r="3.300"/><circle cx="5.500" cy="18" r="3.300"/><path d="M8 8.200L21 20.500M8 15.800L21 3.500"/></g></svg>
<svg style="left:714.5px;top:143.1px" width="11" height="11.5" viewBox="0 0 24 24"><g fill="none" stroke="#444746" stroke-width="2.200"><rect x="8" y="2" width="13" height="15.500" rx="1.500"/><path d="M4 6.500V21.500H16"/></g></svg>
<svg style="left:714.5px;top:164.6px" width="11" height="11.5" viewBox="0 0 24 24"><g fill="none" stroke="#444746" stroke-width="2.200"><rect x="3.500" y="4.500" width="17" height="17" rx="1.500"/></g><path d="M8 2h8v6H8z" fill="#444746"/><path d="M4.500 8h15" stroke="#444746" stroke-width="1.500"/></svg>
<svg style="left:714.5px;top:185.4px" width="11" height="11.5" viewBox="0 0 24 24"><g fill="none" stroke="#444746" stroke-width="2.200"><path d="M20.500 10V4.500H3.500V21.500H9"/></g><path d="M8 2h8v6H8z" fill="#444746"/><path d="M12 13h10M17 13v4M13.500 22l7-6.500" stroke="#444746" stroke-width="2" fill="none"/></svg>
<svg style="left:714.5px;top:206.5px" width="11" height="12" viewBox="0 0 24 24"><path d="M16 9v10H8V9h8m-1.500-6h-5l-1 1H5v2h14V4h-3.500l-1-1zM18 7H6v12c0 1.100.9 2 2 2h8c1.100 0 2-.9 2-2V7z" fill="#444746"/><path d="M10 10.500v7M14 10.500v7" stroke="#444746" stroke-width="1.500"/></svg>
<svg style="left:714.2px;top:239.6px" width="11.5" height="11.5" viewBox="0 0 24 24"><g fill="none" stroke="#444746" stroke-width="2.300"><circle cx="9" cy="9" r="6.800"/><path d="M17 12h5v10H12v-5"/></g></svg>
<svg style="left:714.2px;top:272.1px" width="11.5" height="11.5" viewBox="0 0 24 24"><g fill="none" stroke="#444746"><rect x="8" y="3" width="13" height="13" rx="1.500" stroke-width="2.300"/><path d="M4 7.500V20h12.500" stroke-width="1.800" stroke-dasharray="2 1.600"/></g></svg>
<svg style="left:714.8px;top:294.1px" width="10.5" height="10.5" viewBox="0 0 24 24"><path d="M19 6.500A8 8 0 1 0 20 14" fill="none" stroke="#444746" stroke-width="2.300"/><path d="M20.500 2.500v7h-7z" fill="#444746"/><circle cx="12" cy="12" r="1.800" fill="#444746"/></svg>
<svg style="left:714.5px;top:315.3px" width="11" height="11" viewBox="0 0 24 24"><g fill="none" stroke="#444746" stroke-width="2.300"><path d="M3 8V3h5M16 3h5v5M21 16v5h-5M8 21H3v-5"/><circle cx="12" cy="12" r="3.300"/></g></svg>
<svg style="left:714.5px;top:347.1px" width="11" height="12" viewBox="0 0 24 24"><g fill="none" stroke="#444746"><path d="M3.500 1v22" stroke-width="2.200"/><path d="M7.500 8h14" stroke-width="2.600"/><path d="M7.500 16h9" stroke-width="2.600"/></g></svg>
<svg style="left:714.0px;top:368.7px" width="12" height="11" viewBox="0 0 24 24"><g fill="none" stroke="#444746"><path d="M1 3.500h22" stroke-width="2.200"/><path d="M8 7.500v15" stroke-width="2.600"/><path d="M16 7.500v8" stroke-width="2.600"/></g></svg>
<svg style="left:714.5px;top:401.8px" width="11" height="11" viewBox="0 0 24 24"><g fill="none" stroke="#444746" stroke-width="2.300"><rect x="3" y="3" width="12" height="12" rx="1"/><rect x="9" y="9" width="12" height="12" rx="1"/></g></svg>
<svg style="left:714.0px;top:434.4px" width="12" height="11.5" viewBox="0 0 24 24"><path d="M3 3h18v14H7l-4 4z" fill="none" stroke="#444746" stroke-width="2.200" stroke-linejoin="round"/><path d="M12 6.500v7M8.500 10h7" stroke="#444746" stroke-width="2" fill="none"/></svg>
<svg style="left:714.0px;top:466.3px" width="12" height="12" viewBox="0 0 24 24"><g fill="none" stroke="#444746" stroke-width="2.200"><circle cx="14.500" cy="9.500" r="6.500"/><path d="M9 6.300A6.500 6.500 0 1 0 17.700 15"/><path d="M5.500 9.500A6.500 6.500 0 1 0 14.500 18.500" /></g></svg>
<svg style="left:714.8px;top:498.5px" width="10.5" height="12" viewBox="0 0 24 24"><path d="M5 3h14v9H5z" fill="none" stroke="#444746" stroke-width="2.300"/><path d="M5 9h14v3H5z" fill="#444746"/><path d="M12 12v5M8.500 17h7M12 17v5" stroke="#444746" stroke-width="2.300" fill="none"/></svg>
<svg style="left:714.0px;top:531.2px" width="12" height="12" viewBox="0 0 24 24"><path d="M12 3a9 9 0 1 0 0 18c1.400 0 2-1 2-2 0-.8-.5-1.300-.5-2 0-1 .8-1.800 2-1.800h2A3.600 3.600 0 0 0 21 11.500C21 6.500 17 3 12 3z" fill="none" stroke="#444746" stroke-width="2.200"/><circle cx="7.500" cy="11.500" r="1.400" fill="#444746"/><circle cx="10" cy="7.500" r="1.400" fill="#444746"/><circle cx="14.500" cy="7.500" r="1.400" fill="#444746"/><circle cx="17" cy="11.500" r="1.400" fill="#444746"/></svg>
<span class="t" style="left:730.8px;top:122.98px;font-size:10.3px;color:#202124;letter-spacing:-0.573px;">Cut</span>
<span class="t" style="left:883.7px;top:123.07px;font-size:10.2px;color:#5f6368;letter-spacing:-0.417px;">Ctrl+X</span>
<span class="t" style="left:730.8px;top:144.28px;font-size:10.3px;color:#202124;letter-spacing:-0.699px;">Copy</span>
<span class="t" style="left:883.5px;top:144.37px;font-size:10.2px;color:#5f6368;letter-spacing:-0.483px;">Ctrl+C</span>
<span class="t" style="left:730.8px;top:165.78px;font-size:10.3px;color:#202124;letter-spacing:-0.387px;">Paste</span>
<span class="t" style="left:883.7px;top:165.87px;font-size:10.2px;color:#5f6368;letter-spacing:-0.417px;">Ctrl+V</span>
<span class="t" style="left:730.8px;top:186.68px;font-size:10.3px;color:#202124;letter-spacing:-0.156px;">Paste without formatting</span>
<span class="t" style="left:858.0px;top:186.77px;font-size:10.2px;color:#5f6368;letter-spacing:-0.255px;">Ctrl+Shift+V</span>
<span class="t" style="left:730.8px;top:207.98px;font-size:10.3px;color:#202124;letter-spacing:-0.466px;">Delete</span>
<span class="t" style="left:730.8px;top:240.78px;font-size:10.3px;color:#202124;letter-spacing:-0.530px;">Change shape</span>
<span class="t" style="left:730.8px;top:273.28px;font-size:10.3px;color:#202124;letter-spacing:-0.562px;">Order</span>
<span class="t" style="left:730.8px;top:294.78px;font-size:10.3px;color:#202124;letter-spacing:-0.426px;">Rotate</span>
<span class="t" style="left:730.8px;top:316.28px;font-size:10.3px;color:#202124;letter-spacing:-0.437px;">Center on page</span>
<span class="t" style="left:730.8px;top:348.58px;font-size:10.3px;color:#202124;letter-spacing:-0.231px;">Align horizontally</span>
<span class="t" style="left:730.8px;top:369.68px;font-size:10.3px;color:#202124;letter-spacing:-0.207px;">Align vertically</span>
<span class="t" style="left:730.8px;top:402.78px;font-size:10.3px;color:#202124;letter-spacing:-0.628px;">Group</span>
<span class="t" style="left:865.5px;top:402.87px;font-size:10.2px;color:#5f6368;letter-spacing:-0.322px;">Ctrl+Alt+G</span>
<span class="t" style="left:730.8px;top:435.08px;font-size:10.3px;color:#202124;letter-spacing:-0.422px;">Comment</span>
<span class="t" style="left:863.8px;top:435.17px;font-size:10.2px;color:#5f6368;letter-spacing:-0.203px;">Ctrl+Alt+M</span>
<span class="t" style="left:730.8px;top:467.78px;font-size:10.3px;color:#202124;letter-spacing:-0.259px;">Animate</span>
<span class="t" style="left:730.8px;top:499.98px;font-size:10.3px;color:#202124;letter-spacing:-0.236px;">Format options</span>
<span class="t" style="left:730.8px;top:532.68px;font-size:10.3px;color:#202124;letter-spacing:-0.317px;">Add to theme</span>
<div class="a" style="left:707px;top:390.200px;width:224px;height:41.400px;border:4.100px solid #d9241f"></div>
<div class="a" style="left:572.600px;top:189.200px;width:133.600px;height:216.400px;border:4.200px solid #d9241f"></div>
<div class="a" style="left:0;top:543.400px;width:1024px;height:3px;background:#d4d4d4"></div>
</div>
</body>
</html>
